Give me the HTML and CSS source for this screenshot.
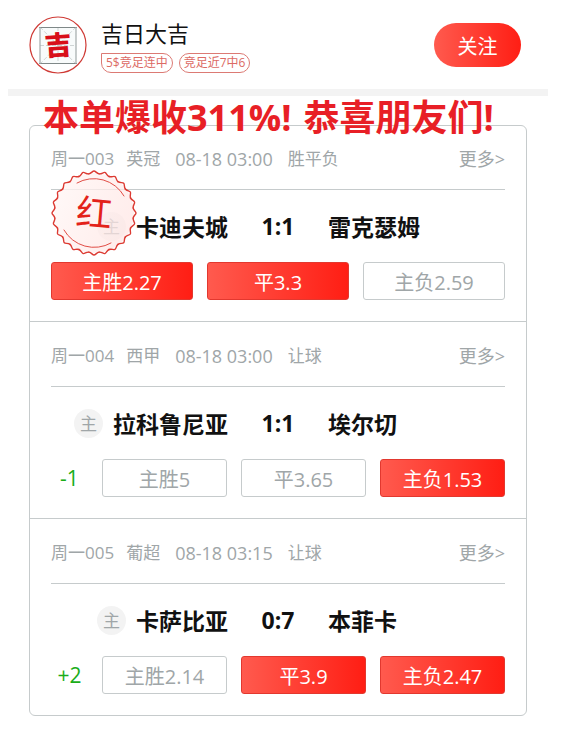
FILE: index.html
```html
<!DOCTYPE html>
<html lang="zh-CN">
<head>
    <meta charset="UTF-8">
    <meta name="viewport" content="width=device-width, initial-scale=1.0">
    <title>吉日大吉</title>
    <link rel="stylesheet" href="styles.css">
</head>
<body>
    <div class="page">
        <header class="profile">
            <svg class="avatar" viewBox="0 0 58 58" aria-hidden="true">
                <circle cx="29" cy="29" r="28" fill="#fff" stroke="#cf3a35" stroke-width="1.2"/>
                <rect x="11" y="11" width="36" height="37" fill="#f8fbfb"/>
                <path d="M11 11L47 48M47 11L11 48M29 11V48M11 29.5H47" stroke="#c3caca" stroke-width="0.8" stroke-dasharray="4 2"/>
                <path d="M10 11.5H48M10 47.5H48" stroke="#7f8888" stroke-width="1.2"/>
                <path d="M11 11V48M47 11V48" stroke="#a2aaaa" stroke-width="1.2"/>
                <text x="29" y="39" text-anchor="middle" class="avatar-text" transform="rotate(-4 29 29)">吉</text>
            </svg>
            <div class="profile-info">
                <h1>吉日大吉</h1>
                <div class="tags">
                    <span class="tag tag-first">5$竞足连中</span>
                    <span class="tag">竞足近7中6</span>
                </div>
            </div>
            <button type="button" class="follow">关注</button>
        </header>

        <main class="matches">
            <div class="banner"><span>本单爆收311%!</span><span class="banner-end">恭喜朋友们!</span></div>

            <section class="match">
                <div class="match-info">
                    <span class="number">周一003</span>
                    <span class="league">英冠</span>
                    <span class="time">08-18 03:00</span>
                    <span class="type">胜平负</span>
                    <a href="#" class="more">更多&gt;</a>
                </div>
                <div class="teams">
                    <div class="home"><span class="home-badge">主</span>卡迪夫城</div>
                    <div class="score">1:1</div>
                    <div class="away">雷克瑟姆</div>
                </div>
                <div class="odds">
                    <button type="button" class="odd selected">主胜2.27</button>
                    <button type="button" class="odd selected">平3.3</button>
                    <button type="button" class="odd">主负2.59</button>
                </div>
                <svg class="stamp" viewBox="-43 -43 86 86" aria-hidden="true">
                    <defs>
                        <linearGradient id="stampFill" x1="0" y1="0" x2="1" y2="0.4">
                            <stop offset="0" stop-color="#fff8f7" stop-opacity="0.8"/>
                            <stop offset="1" stop-color="#ffe6e4" stop-opacity="0.7"/>
                        </linearGradient>
                        <path id="tooth" d="M-5.15-39.16C-2.6-39.5-1.6-42 0-42C1.6-42 2.6-39.5 5.15-39.16"/>
                        <g id="teeth">
                            <use href="#tooth"/>
                            <use href="#tooth" transform="rotate(15)"/>
                            <use href="#tooth" transform="rotate(30)"/>
                            <use href="#tooth" transform="rotate(45)"/>
                        </g>
                    </defs>
                    <circle r="40" fill="url(#stampFill)"/>
                    <g fill="none" stroke="#dc3a32" stroke-width="1.4" stroke-linecap="round">
                        <use href="#teeth"/>
                        <use href="#teeth" transform="rotate(60)"/>
                        <use href="#teeth" transform="rotate(120)"/>
                        <use href="#teeth" transform="rotate(180)"/>
                        <use href="#teeth" transform="rotate(240)"/>
                        <use href="#teeth" transform="rotate(300)"/>
                        <path stroke-width="0.9" d="M-17-30A34.5 34.5 0 0 1 30-17M-30 17A34.5 34.5 0 0 0 17 30"/>
                    </g>
                    <text x="0" y="13" text-anchor="middle" class="stamp-text" transform="rotate(5)">红</text>
                </svg>
            </section>

            <section class="match">
                <div class="match-info">
                    <span class="number">周一004</span>
                    <span class="league">西甲</span>
                    <span class="time">08-18 03:00</span>
                    <span class="type">让球</span>
                    <a href="#" class="more">更多&gt;</a>
                </div>
                <div class="teams">
                    <div class="home"><span class="home-badge">主</span>拉科鲁尼亚</div>
                    <div class="score">1:1</div>
                    <div class="away">埃尔切</div>
                </div>
                <div class="odds">
                    <span class="handicap">-1</span>
                    <button type="button" class="odd">主胜5</button>
                    <button type="button" class="odd">平3.65</button>
                    <button type="button" class="odd selected">主负1.53</button>
                </div>
            </section>

            <section class="match">
                <div class="match-info">
                    <span class="number">周一005</span>
                    <span class="league">葡超</span>
                    <span class="time">08-18 03:15</span>
                    <span class="type">让球</span>
                    <a href="#" class="more">更多&gt;</a>
                </div>
                <div class="teams">
                    <div class="home"><span class="home-badge">主</span>卡萨比亚</div>
                    <div class="score">0:7</div>
                    <div class="away">本菲卡</div>
                </div>
                <div class="odds">
                    <span class="handicap">+2</span>
                    <button type="button" class="odd">主胜2.14</button>
                    <button type="button" class="odd selected">平3.9</button>
                    <button type="button" class="odd selected">主负2.47</button>
                </div>
            </section>
        </main>
    </div>
</body>
</html>
```
FILE: styles.css
```css
:root {
    --red: #ff1e14;
    --red-light: #ff5a4e;
    --line: #c6cbcc;
    --muted: #a0a6a8;
    --green: #1aad19;
}

* {
    box-sizing: border-box;
}

body {
    margin: 0;
    background-color: #fff;
    color: #111;
    font-family: "Open Sans", "Noto Sans CJK SC", sans-serif;
}

button {
    font-family: inherit;
    cursor: pointer;
}

.page {
    padding: 0 32px 14px 8px;
}

/* Profile header */
.profile {
    display: flex;
    align-items: center;
    padding: 16px 27px 15px 21px;
    border-bottom: 7px solid #f3f3f3;
}

.avatar {
    width: 58px;
    height: 58px;
    margin-right: 14px;
}

.avatar-text {
    font-size: 27px;
    font-weight: 900;
    fill: #d80f1a;
}

.profile-info {
    flex: 1;
}

.profile h1 {
    margin: 0 0 5px;
    font-size: 22px;
    font-weight: 400;
    line-height: 30px;
}

.tags {
    display: flex;
    gap: 6px;
}

.tag {
    padding: 0 4px;
    border: 1px solid #dc7a74;
    border-radius: 10px;
    color: #dc6a64;
    font-size: 12px;
    line-height: 18px;
}

.tag-first {
    border-top-left-radius: 0;
}

.follow {
    width: 87px;
    height: 44px;
    padding: 0;
    border: none;
    border-radius: 22px;
    background: linear-gradient(to right, var(--red-light), var(--red));
    color: #fff;
    font-size: 20px;
}

/* Match list */
.matches {
    position: relative;
    margin: 29px 21px 0;
    border: 1px solid var(--line);
    border-radius: 6px;
}

.banner {
    position: absolute;
    top: -34px;
    left: 13px;
    z-index: 2;
    color: #e81f26;
    font-size: 36px;
    font-weight: 700;
    line-height: 52px;
    white-space: nowrap;
}

.banner-end {
    margin-left: 12px;
}

.match {
    position: relative;
    padding: 0 21px 21px;
    border-bottom: 1px solid var(--line);
}

.match + .match {
    padding-top: 1px;
}

.match:last-child {
    border-bottom: none;
}

.match-info {
    display: flex;
    align-items: center;
    padding: 20px 0 17px;
    border-bottom: 1px solid var(--line);
    color: var(--muted);
    font-size: 17px;
    line-height: 26px;
}

.league {
    margin-left: 12px;
}

.time {
    margin: 0 15px;
    font-size: 18px;
}

.more {
    margin-left: auto;
    color: var(--muted);
    font-size: 18px;
    text-decoration: none;
}

.teams {
    display: grid;
    grid-template-columns: 1fr 100px 1fr;
    align-items: center;
    height: 72px;
    font-size: 23px;
    font-weight: 700;
}

.home {
    display: flex;
    align-items: center;
    justify-content: flex-end;
}

.home-badge {
    width: 29px;
    height: 29px;
    margin-right: 10px;
    border-radius: 50%;
    background-color: #f3f3f3;
    color: var(--muted);
    font-size: 17px;
    font-weight: 400;
    line-height: 29px;
    text-align: center;
}

.score {
    text-align: center;
}

.odds {
    display: flex;
    align-items: center;
    gap: 14px;
}

.handicap {
    width: 37px;
    color: var(--green);
    font-size: 21px;
    text-align: center;
}

.odd {
    flex: 1;
    height: 38px;
    padding: 0;
    border: 1px solid var(--line);
    border-radius: 3px;
    background-color: #fff;
    color: var(--muted);
    font-size: 20px;
}

.odd.selected {
    border-color: #e2382f;
    background: linear-gradient(to right, var(--red-light), var(--red));
    color: #fff;
}

.stamp {
    position: absolute;
    top: 44px;
    left: 21px;
    width: 86px;
    height: 86px;
}

.stamp-text {
    font-size: 36px;
    font-weight: 400;
    fill: #e3221a;
}
```
